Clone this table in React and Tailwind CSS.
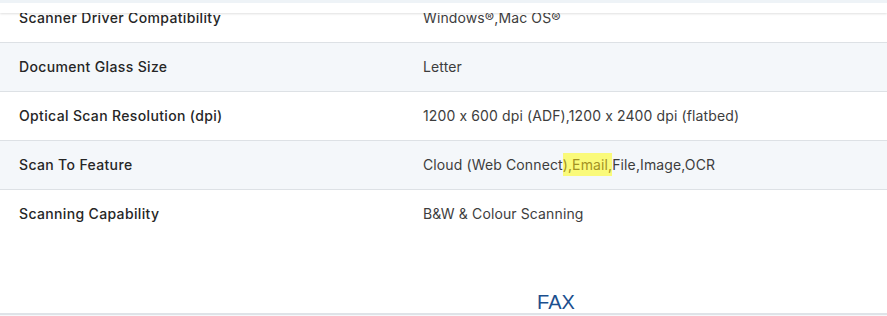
export default function App() {
  const rows = [
    { label: "Scanner Driver Compatibility", value: "Windows®,Mac OS®", bg: "bg-white" },
    { label: "Document Glass Size", value: "Letter", bg: "bg-[#f4f7fa]" },
    { label: "Optical Scan Resolution (dpi)", value: "1200 x 600 dpi (ADF),1200 x 2400 dpi (flatbed)", bg: "bg-white" },
    { label: "Scan To Feature", value: "scan", bg: "bg-[#f4f7fa]" },
    { label: "Scanning Capability", value: "B&W & Colour Scanning", bg: "bg-white", last: true },
  ];
  return (
    <div className="relative w-[887px] h-[316px] overflow-hidden bg-white font-['Inter','Noto_Sans',sans-serif]">
      <div className="w-[1112px] -mt-[6px]">
        {rows.map((r, i) => (
          <div
            key={i}
            className={`flex items-center h-[49px] pb-[2px] ${r.bg} ${r.last ? "" : "border-b border-[#dde1e5]"}`}
          >
            <div className="w-[423px] pl-[19px] text-[14px] text-[#262626] font-medium tracking-[0.35px]">{r.label}</div>
            <div className="text-[14px] text-[#3d3d3d] tracking-[0.12px]">
              {r.value === "scan" ? (
                <span>
                  Cloud (Web Connect<span className="bg-[#fafa7a] text-[#a39223] py-[3px]">),Email,</span>File,Image,OCR
                </span>
              ) : (
                r.value
              )}
            </div>
          </div>
        ))}
        <div className="h-[46px]" />
        <div className="flex justify-center h-[28px] items-end pb-[1px]">
          <span className="font-['Liberation_Sans',Arial,sans-serif] text-[20px] leading-none text-[#1b4f8e]">FAX</span>
        </div>
        <div className="h-[2px] bg-[#dfe3e8]" />
        <div className="h-[10px] bg-[#f6f8fa]" />
      </div>
      <div className="absolute top-0 left-0 right-0 h-[13px] bg-white border-t-[3px] border-[#eef3f7] shadow-[0_1px_2px_rgba(0,0,0,0.12)]" />
    </div>
  );
}
